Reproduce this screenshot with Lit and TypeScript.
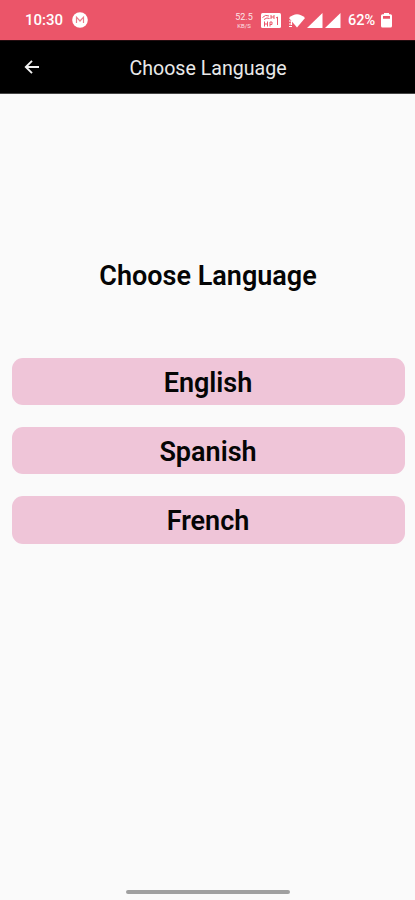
import { LitElement, html, css } from "lit";
import { customElement } from "lit/decorators.js";

@customElement("status-bar")
class StatusBar extends LitElement {
  static styles = css`
    :host { display: flex; align-items: center; box-sizing: border-box; height: 40px; padding: 0 23px 0 25px; background: #eb5569; color: #fff; }
    .time { font-size: 15px; font-weight: 500; line-height: 18px; width: 47px; white-space: nowrap; }
    svg { display: block; flex: none; }
    .right { margin-left: auto; display: flex; align-items: center; }
    .speed { width: 18px; text-align: center; opacity: .85; margin-right: 8px; white-space: nowrap; }
    .rate { font-size: 9px; line-height: 10px; }
    .unit { font-size: 6px; line-height: 7px; }
    .gap { margin-right: 7px; }
    .near { margin-right: 2px; }
    .battery { font-size: 14.500px; font-weight: 500; width: 29px; margin: 0 4px 0 7px; padding-top: 2px; line-height: 18px; white-space: nowrap; }
  `;
  render() {
    return html`
      <span class="time">10:30</span>
      <svg width="16" height="16" viewBox="0 0 16 16"><circle cx="8" cy="8" r="7.8" fill="#fff"/><path d="M4.500 11V5.200L8 9l3.500-3.800V11" fill="none" stroke="#eb7d8c" stroke-width="1.200"/></svg>
      <div class="right">
        <div class="speed"><div class="rate">52.5</div><div class="unit">KB/S</div></div>
        <svg class="gap" width="20" height="15" viewBox="0 0 20 15">
          <rect width="20" height="15" rx="1.500" fill="#fff"/>
          <path d="M1.500 4.500Q4.500 1 8 3M3 6.500Q6 4 8.500 5.500M10 2v4M10 4h3M13 2v4M3.500 8.500v5M3.500 11h3M6.500 8.500v5M9 13.500V9h2v2.500H9M15 5l1.500-1v8" fill="none" stroke="#eb5569" stroke-width="1"/>
        </svg>
        <svg class="near" width="17" height="15" viewBox="0 0 17 15"><path d="M1 5Q9 -2.500 17 5L9 14.500Z" fill="#fff"/><path d="M1 8h1.800M3.500 8v4M1 11h1.800M1 13.500h3" stroke="#fff" stroke-width="1.200"/></svg>
        <svg class="near" width="16" height="15" viewBox="0 0 16 15"><path d="M0 15L15.500 0V15Z" fill="#fff"/></svg>
        <svg width="16" height="15" viewBox="0 0 16 15"><path d="M0 15L15.500 0V15Z" fill="#fff"/></svg>
        <span class="battery">62%</span>
        <svg width="11" height="16" viewBox="0 0 11 16"><path fill="#fff" fill-rule="evenodd" d="M3 1h5v1.200h1.500Q11 2.200 11 3.700v10.300Q11 15.500 9.500 15.500h-8Q0 15.500 0 14V3.700Q0 2.200 1.500 2.200H3ZM2 4V6.800h7V4Z"/></svg>
      </div>`;
  }
}

@customElement("app-header")
class AppHeader extends LitElement {
  static styles = css`
    :host { display: grid; grid-template-columns: 65px 1fr 64px; align-items: center; box-sizing: border-box; height: 54px; background: #000; color: #e9e9e9; border-top: 1px solid #240d10; border-bottom: 1px solid #454545; }
    .back { display: block; margin-left: 24px; }
    .title { padding-top: 4px; text-align: center; font-size: 19.600px; line-height: 24px; white-space: nowrap; }
  `;
  render() {
    return html`
      <svg class="back" width="16" height="16" viewBox="0 0 16 16"><path d="M15 8H2M8 1.800L1.800 8 8 14.200" fill="none" stroke="#f2f2f2" stroke-width="1.900"/></svg>
      <span class="title">Choose Language</span>`;
  }
}

@customElement("app-root")
class AppRoot extends LitElement {
  static styles = css`
    :host { display: flex; flex-direction: column; height: 900px; background: #fafafa; color: #050505; font-family: Roboto, sans-serif; overflow: hidden; }
    .content { flex: 1; padding: 166px 10.500px 0 11.500px; }
    .heading { margin: 0 0 66px; text-align: center; font-size: 27px; line-height: 32px; font-weight: 600; white-space: nowrap; }
    .list { display: grid; gap: 22px; }
    .option { display: block; box-sizing: border-box; width: 100%; height: 47.200px; padding: 4px 0 0; border: 0; border-radius: 11px; background: #efc5d8; color: #050505; font: 600 27px/43px Roboto, sans-serif; text-align: center; }
    .handle { width: 164px; height: 4px; margin: 0 auto 6.500px 126px; border-radius: 2px; background: #a0a0a0; }
  `;
  render() {
    return html`
      <status-bar></status-bar>
      <app-header></app-header>
      <main class="content">
        <h1 class="heading">Choose Language</h1>
        <div class="list">
          ${["English", "Spanish", "French"].map((name) => html`<button class="option">${name}</button>`)}
        </div>
      </main>
      <div class="handle"></div>`;
  }
}
